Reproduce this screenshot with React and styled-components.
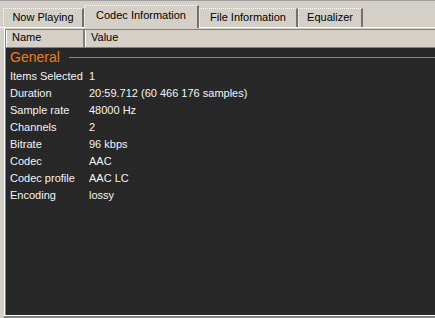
import React from 'react'
import styled, { createGlobalStyle } from 'styled-components'

const GlobalStyle = createGlobalStyle`
  html, body {
    margin: 0;
    padding: 0;
    background: #d4d0c8;
  }
`

const Window = styled.div`
  width: 435px;
  height: 318px;
  box-sizing: border-box;
  background: #d4d0c8;
  font-family: "Liberation Sans", Arial, sans-serif;
  font-size: 11px;
  color: #000;
  display: flex;
  flex-direction: column;
  overflow: hidden;
  border-top: 1px solid #a0a0a0;
  padding-top: 4px;
`

const TabStrip = styled.div`
  display: flex;
  align-items: flex-end;
  height: 22px;
  padding-left: 3px;
  border-bottom: 1px solid #ffffff;
`

const Tab = styled.div`
  box-sizing: border-box;
  height: ${p => (p.$active ? '23px' : '19px')};
  margin-bottom: ${p => (p.$active ? '-1px' : '0')};
  width: ${p => p.$width}px;
  padding-top: ${p => (p.$active ? '3px' : '2px')};
  text-align: center;
  background: #d4d0c8;
  border-top: 1px dotted #ffffff;
  border-left: 1px dotted #ffffff;
  border-right: 2px solid #707070;
  position: relative;
  z-index: ${p => (p.$active ? 1 : 0)};
`

const ListView = styled.div`
  flex: 1;
  display: flex;
  flex-direction: column;
  margin-left: 4px;
  border-left: 1px solid #ffffff;
  padding-top: 1px;
  border-bottom: 1px solid #ffffff;
  margin-bottom: 2px;
  box-shadow: 0 2px 0 #808080;
`

const Header = styled.div`
  display: flex;
  height: 17px;
  border-top: 1px solid #808080;
  border-left: 1px solid #808080;
  border-bottom: 1px solid #808080;
  background: #d4d0c8;
`

const HeaderCell = styled.div`
  box-sizing: border-box;
  width: ${p => (p.$width ? `${p.$width}px` : 'auto')};
  flex: ${p => (p.$width ? 'none' : '1')};
  padding: 1px 0 0 5px;
  border-right: ${p => (p.$width ? '2px solid #808080' : 'none')};
  border-left: 1px solid #ffffff;
`

const Body = styled.div`
  flex: 1;
  background: #282828;
  border-left: 1px solid #808080;
  background-image: repeating-linear-gradient(
    to bottom,
    #292929 0px,
    #292929 1px,
    #262626 1px,
    #262626 2px
  );
`

const GroupRow = styled.div`
  display: flex;
  align-items: center;
  height: 19px;
  padding-left: 4px;
  padding-bottom: 1px;
  box-sizing: border-box;
  color: #f07a14;
  font-size: 14px;
`

const GroupLine = styled.div`
  flex: 1;
  height: 1px;
  background: #e06a0a;
  margin-left: 9px;
`

const Row = styled.div`
  display: flex;
  height: 17px;
  align-items: center;
  color: #f4f4f4;
`

const NameCell = styled.div`
  width: 83px;
  padding-left: 4px;
  box-sizing: border-box;
  white-space: nowrap;
`

const ValueCell = styled.div`
  white-space: nowrap;
`

const tabs = [
  { label: 'Now Playing', width: 81 },
  { label: 'Codec Information', width: 115, active: true },
  { label: 'File Information', width: 99 },
  { label: 'Equalizer', width: 65 },
]

const rows = [
  ['Items Selected', '1'],
  ['Duration', '20:59.712 (60 466 176 samples)'],
  ['Sample rate', '48000 Hz'],
  ['Channels', '2'],
  ['Bitrate', '96 kbps'],
  ['Codec', 'AAC'],
  ['Codec profile', 'AAC LC'],
  ['Encoding', 'lossy'],
]

export default function App() {
  return (
    <Window>
      <GlobalStyle />
      <TabStrip>
        {tabs.map(t => (
          <Tab key={t.label} $active={t.active} $width={t.width}>
            {t.label}
          </Tab>
        ))}
      </TabStrip>
      <ListView>
        <Header>
          <HeaderCell $width={79}>Name</HeaderCell>
          <HeaderCell>Value</HeaderCell>
        </Header>
        <Body>
          <GroupRow>
            General
            <GroupLine />
          </GroupRow>
          {rows.map(([name, value]) => (
            <Row key={name}>
              <NameCell>{name}</NameCell>
              <ValueCell>{value}</ValueCell>
            </Row>
          ))}
        </Body>
      </ListView>
    </Window>
  )
}
